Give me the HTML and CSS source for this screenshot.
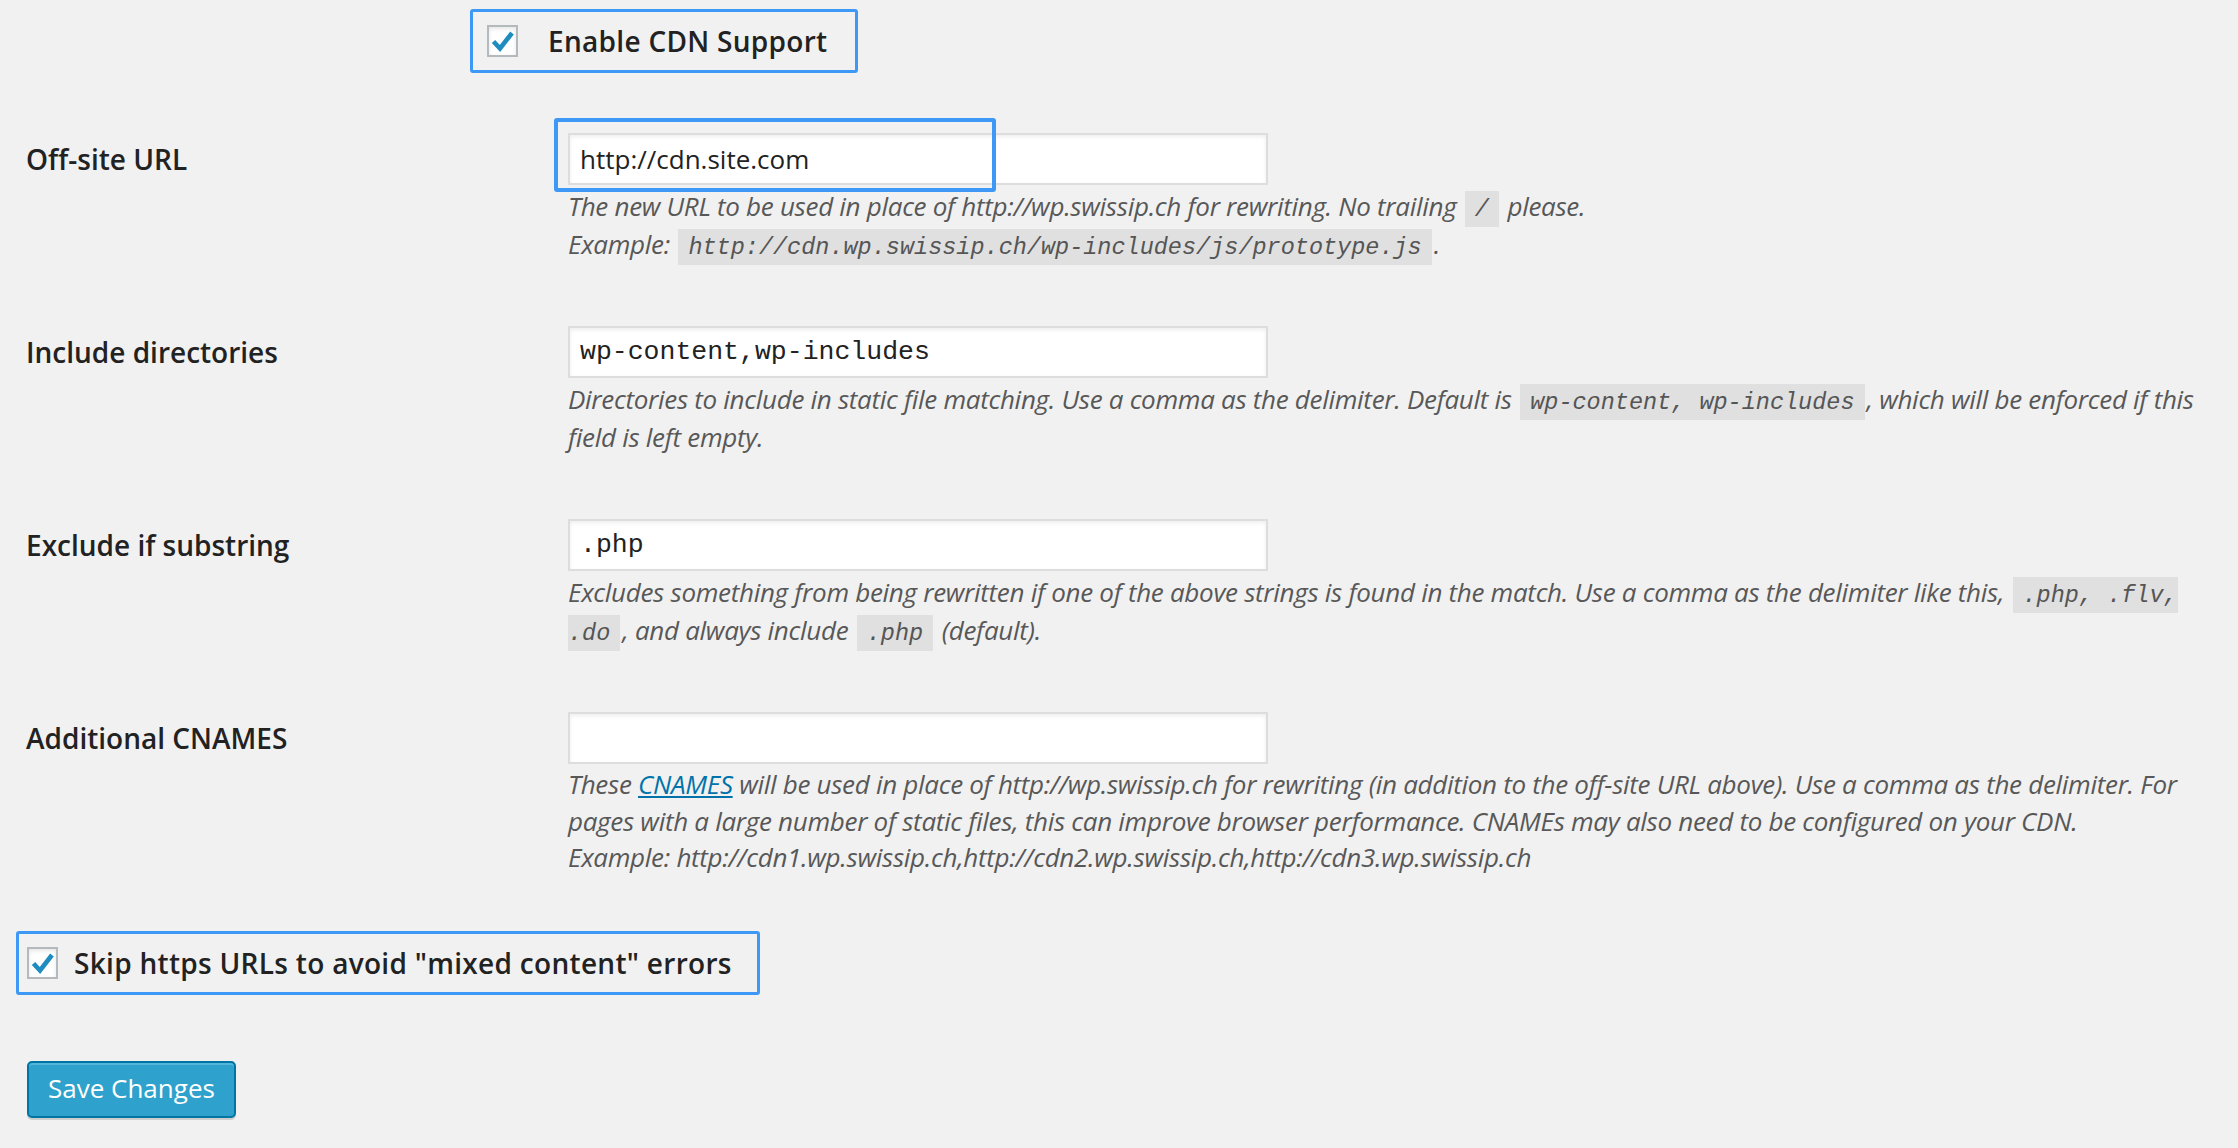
FILE: index.html
```html
<!DOCTYPE html>
<html lang="en">
<head>
<meta charset="utf-8">
<title>CDN Settings</title>
<link rel="stylesheet" href="styles.css">
</head>
<body>
<form class="settings">
  <div class="enable-wrap">
    <label class="hl-box enable-box">
      <span class="check"><svg viewBox="0 0 27 28"><polyline points="4.5,14.5 11,21.5 23,6" fill="none" stroke="#1e8cbe" stroke-width="4.6" stroke-linejoin="miter"/></svg></span>
      <span class="check-label">Enable CDN Support</span>
    </label>
  </div>

  <div class="form-table">
    <div class="row">
      <div class="th">Off-site URL</div>
      <div class="td">
        <div class="field">
          <input class="regular-text" type="text" value="http://cdn.site.com">
          <span class="hl-overlay"></span>
        </div>
        <p class="description">The new URL to be used in place of http://wp.swissip.ch for rewriting. No trailing <code>/</code> please.<br>Example: <code>http://cdn.wp.swissip.ch/wp-includes/js/prototype.js</code>.</p>
      </div>
    </div>

    <div class="row">
      <div class="th">Include directories</div>
      <div class="td">
        <div class="field">
          <input class="regular-text code" type="text" value="wp-content,wp-includes">
        </div>
        <p class="description">Directories to include in static file matching. Use a comma as the delimiter. Default is <code>wp-content, wp-includes</code>, which will be enforced if this field is left empty.</p>
      </div>
    </div>

    <div class="row">
      <div class="th">Exclude if substring</div>
      <div class="td">
        <div class="field">
          <input class="regular-text code" type="text" value=".php">
        </div>
        <p class="description">Excludes something from being rewritten if one of the above strings is found in the match. Use a comma as the delimiter like this, <code>.php, .flv, .do</code>, and always include <code>.php</code> (default).</p>
      </div>
    </div>

    <div class="row">
      <div class="th">Additional CNAMES</div>
      <div class="td">
        <div class="field">
          <input class="regular-text code" type="text" value="">
        </div>
        <p class="description tight">These <a href="#">CNAMES</a> will be used in place of http://wp.swissip.ch for rewriting (in addition to the off-site URL above). Use a comma as the delimiter. For pages with a large number of static files, this can improve browser performance. CNAMEs may also need to be configured on your CDN.<br>Example: http://cdn1.wp.swissip.ch,http://cdn2.wp.swissip.ch,http://cdn3.wp.swissip.ch</p>
      </div>
    </div>
  </div>

  <div class="skip-wrap">
    <label class="hl-box skip-box">
      <span class="check"><svg viewBox="0 0 27 28"><polyline points="4.5,14.5 11,21.5 23,6" fill="none" stroke="#1e8cbe" stroke-width="4.6" stroke-linejoin="miter"/></svg></span>
      <span class="check-label">Skip https URLs to avoid "mixed content" errors</span>
    </label>
  </div>

  <div class="submit">
    <button type="button" class="button-primary">Save Changes</button>
  </div>
</form>
</body>
</html>
```

FILE: styles.css
```css
* {
  box-sizing: border-box;
}

html,
body {
  margin: 0;
}

body {
  background: #f1f1f1;
  font-family: "Open Sans", "Liberation Sans", sans-serif;
  color: #222;
}

.settings {
  padding: 9px 28px 40px 26px;
}

.hl-box {
  display: inline-flex;
  align-items: center;
  height: 64px;
  border: 3px solid #3d99f5;
  border-radius: 3px;
}

.enable-box {
  margin-left: 444px;
  padding: 0 28px 0 14px;
  gap: 30px;
}

.check {
  display: flex;
  align-items: center;
  justify-content: center;
  width: 31px;
  height: 32px;
  border: 2px solid #b4b9be;
  background: #fff;
  box-shadow: inset 0 2px 4px rgba(0, 0, 0, 0.1);
}

.check svg {
  display: block;
  width: 27px;
  height: 28px;
}

.check-label {
  font-size: 28px;
  font-weight: 600;
  letter-spacing: 0.3px;
  color: #222;
}

.form-table {
  display: flex;
  flex-direction: column;
  gap: 63px;
  margin-top: 60px;
}

.row {
  display: grid;
  grid-template-columns: 542px 1fr;
}

.th {
  font-size: 28px;
  font-weight: 600;
  line-height: 52px;
  color: #222;
}

.field {
  position: relative;
  width: 700px;
}

.field input {
  display: block;
  width: 700px;
  height: 52px;
  margin: 0;
  padding: 0 10px;
  border: 2px solid #ddd;
  background: #fff;
  box-shadow: inset 0 2px 4px rgba(0, 0, 0, 0.07);
  font-family: "Open Sans", "Liberation Sans", sans-serif;
  font-size: 26px;
  color: #222;
  outline: none;
}

.field input.code {
  font-family: "Liberation Mono", "DejaVu Sans Mono", monospace;
  font-size: 26.5px;
}

.hl-overlay {
  position: absolute;
  left: -14px;
  top: -15px;
  width: 442px;
  height: 74px;
  border: 4px solid #3d99f5;
  border-radius: 3px;
  pointer-events: none;
}

.description {
  margin: 2px 0 0;
  font-size: 26px;
  font-style: italic;
  line-height: 38px;
  letter-spacing: -0.3px;
  color: #585858;
}

.description.tight {
  line-height: 36.5px;
}

.description code {
  padding: 5px 10px 4px;
  margin: 0 2px;
  background: #e0e0e0;
  font-family: "Liberation Mono", "DejaVu Sans Mono", monospace;
  font-size: 23.5px;
  font-style: italic;
  line-height: 1;
  letter-spacing: 0;
  color: #555;
}

.description a {
  color: #0073aa;
  text-decoration: underline;
}

.skip-wrap {
  margin-top: 55px;
}

.skip-box {
  margin-left: -10px;
  padding: 0 25px 0 8px;
  gap: 16px;
}

.submit {
  margin-top: 66px;
  margin-left: 1px;
}

.button-primary {
  height: 57px;
  padding: 0 19px 2px;
  border: 2px solid #0074a2;
  border-radius: 5px;
  background: #2ea2cc;
  box-shadow: inset 0 2px 0 rgba(120, 200, 230, 0.5), 0 2px 0 rgba(0, 0, 0, 0.15);
  font-family: "Open Sans", "Liberation Sans", sans-serif;
  font-size: 26px;
  color: #fff;
  cursor: pointer;
}
```
